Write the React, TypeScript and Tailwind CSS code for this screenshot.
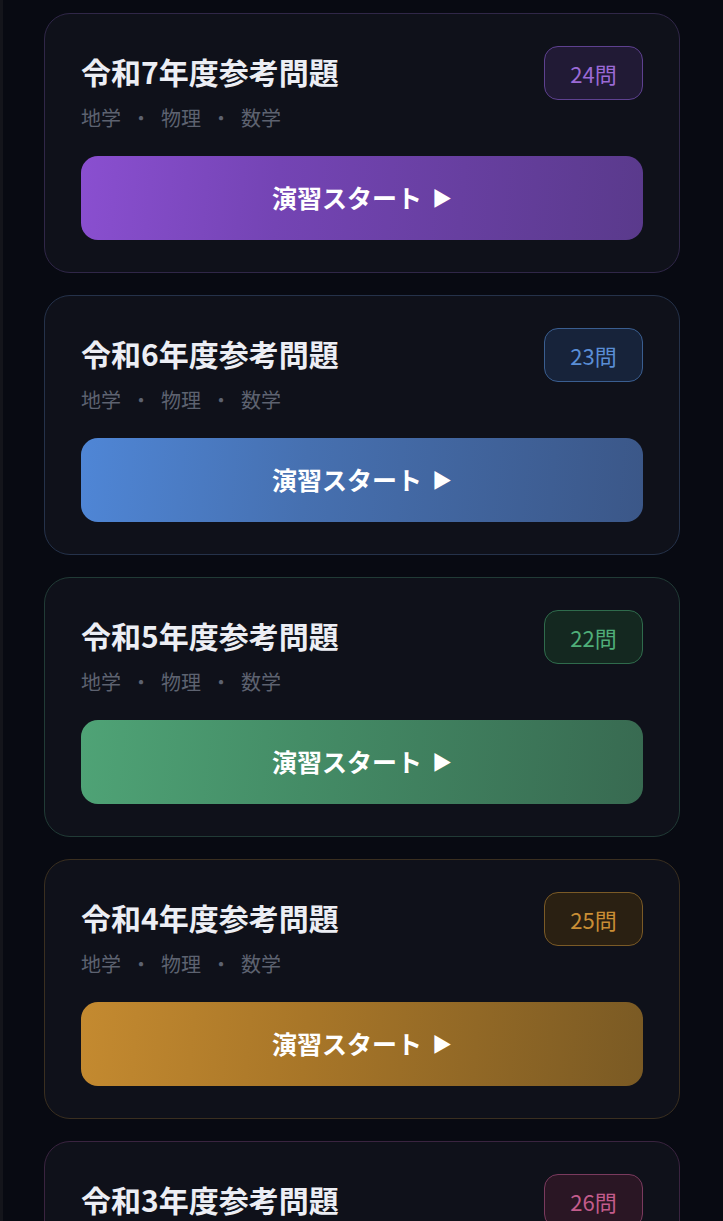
import React from 'react'

type Exam = {
  year: number
  count: number
  card: string
  badge: string
  button: string
}

const EXAMS: Exam[] = [
  {
    year: 7,
    count: 24,
    card: 'border-[#302748]',
    badge: 'border-[#5e4190] bg-[#211a35] text-[#9b6ad6]',
    button: 'bg-[linear-gradient(95deg,#8a4fd0_0%,#7444b4_35%,#5a3a8c_100%)]',
  },
  {
    year: 6,
    count: 23,
    card: 'border-[#25324a]',
    badge: 'border-[#3a5e90] bg-[#17233a] text-[#5a8ed6]',
    button: 'bg-[linear-gradient(95deg,#4f86d6_0%,#4670b0_40%,#3b5788_100%)]',
  },
  {
    year: 5,
    count: 22,
    card: 'border-[#213b36]',
    badge: 'border-[#2f6b4c] bg-[#142820] text-[#4fae79]',
    button: 'bg-[linear-gradient(95deg,#4fa376_0%,#448c66_40%,#386a51_100%)]',
  },
  {
    year: 4,
    count: 25,
    card: 'border-[#3a2f20]',
    badge: 'border-[#7a5a26] bg-[#2a2012] text-[#c98e35]',
    button: 'bg-[linear-gradient(95deg,#c48a30_0%,#a87628_40%,#7a5a24_100%)]',
  },
  {
    year: 3,
    count: 26,
    card: 'border-[#3a2440]',
    badge: 'border-[#7a3a5e] bg-[#2a1624] text-[#c35c8c]',
    button: 'bg-[linear-gradient(95deg,#c4508a_0%,#a8447a_40%,#7a3a5e_100%)]',
  },
]

const SUBJECTS = ['地学', '物理', '数学']

function ExamCard({ exam }: { exam: Exam }) {
  return (
    <div
      className={`rounded-[26px] border bg-[#0f111a] pt-[32px] pb-[32px] px-[36px] ${exam.card}`}
    >
      <div className="flex items-start justify-between">
        <div className="pt-[3px]">
          <h2 className="text-[30px] font-bold leading-[44px] text-[#eceef4]">
            令和{exam.year}年度参考問題
          </h2>
          <div className="mt-[10px] flex gap-[10px] text-[20px] leading-[30px] text-[#5d6270]">
            {SUBJECTS.map((s, i) => (
              <React.Fragment key={s}>
                {i > 0 && <span>・</span>}
                <span>{s}</span>
              </React.Fragment>
            ))}
          </div>
        </div>
        <span
          className={`flex h-[54px] w-[99px] items-center justify-center rounded-[14px] border text-[22px] ${exam.badge}`}
        >
          {exam.count}問
        </span>
      </div>
      <button
        className={`mt-[23px] flex h-[84px] w-full items-center justify-center gap-[10px] rounded-[17px] text-[25px] font-bold text-white ${exam.button}`}
      >
        <span>演習スタート</span>
        <span className="text-[20px]">▶</span>
      </button>
    </div>
  )
}

export default function App() {
  return (
    <div
      className="h-[1221px] overflow-hidden border-l-[3px] border-[#14151b] bg-[#080a12] pt-[13px] pl-[41px] pr-[43px]"
      style={{ fontFamily: '"Noto Sans CJK JP", "Noto Sans", sans-serif' }}
    >
      <div className="flex flex-col gap-[22px]">
        {EXAMS.map((e) => (
          <ExamCard key={e.year} exam={e} />
        ))}
      </div>
    </div>
  )
}
